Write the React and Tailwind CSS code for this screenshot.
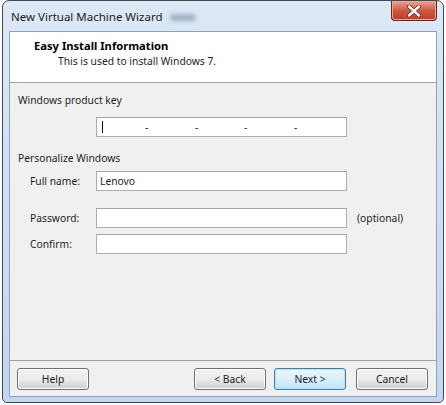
import React from "react";

const font = "font-['Noto_Sans','Liberation_Sans',sans-serif]";

function Field({ value, children }) {
  return (
    <div className="relative h-[20px] w-[251px] border border-[#abadb3] border-t-[#a0a4ab] bg-white text-[10.3px] leading-[18px] text-[#1e1e1e]">
      {value && <span className="pl-[3px]">{value}</span>}
      {children}
    </div>
  );
}

function Button({ label, primary }) {
  return (
    <button
      type="button"
      className={
        "h-[22px] w-[72px] rounded-[3px] border text-[10.3px] leading-[18px] text-[#1e1e1e] bg-gradient-to-b " +
        (primary
          ? "border-[#3c7fb1] from-[#eaf6fd] via-[#d9f0fc] to-[#bee6fd] shadow-[inset_0_0_0_1px_#b5e0f8]"
          : "border-[#707070] from-[#f2f2f2] via-[#ebebeb] to-[#cfcfcf] shadow-[inset_0_0_0_1px_#fcfcfc]")
      }
    >
      {label}
    </button>
  );
}

export default function App() {
  return (
    <div className={`h-[405px] w-[446px] bg-white ${font}`}>
      <div className="ml-[2px] flex h-[403px] w-[442px] flex-col rounded-t-[7px] rounded-b-[5px] border border-[#3f4a58] bg-gradient-to-b from-[#dde8f5] via-[#cfdff1] to-[#c2d6ee]">
        {/* title bar */}
        <div className="flex h-[30px] items-start">
          <div className="flex items-center pl-[8px] pt-[8px] text-[11.5px] leading-[16px] text-[#1a1a1a]">
            New Virtual Machine Wizard
            <span className="ml-[8px] inline-block h-[7px] w-[26px] rounded-full bg-[#9fb1c6] blur-[2px]" />
          </div>
          <div className="ml-auto mr-[6px] flex h-[20px] w-[46px] items-center justify-center rounded-b-[4px] border border-t-0 border-[#5a2b25] bg-gradient-to-b from-[#e7a596] via-[#d2573f] to-[#c23a1f] shadow-[inset_0_0_0_1px_#eba794]">
            <svg width="14" height="12" viewBox="0 0 14 12">
              <path
                d="M2 1.5 L12 10.5 M12 1.5 L2 10.5"
                stroke="#5a2b25"
                strokeWidth="4"
                strokeLinecap="round"
              />
              <path
                d="M2 1.5 L12 10.5 M12 1.5 L2 10.5"
                stroke="#ffffff"
                strokeWidth="2.4"
                strokeLinecap="round"
              />
            </svg>
          </div>
        </div>

        {/* client area */}
        <div className="mx-[6px] mb-[5px] flex flex-1 flex-col border border-[#8da2bb] bg-[#f0f0f0] text-[10.3px] leading-[16px] text-[#1e1e1e]">
          <div className="h-[51px] border-b border-[#a0a0a0] bg-white pl-[24px] pt-[6px]">
            <div className="text-[11.2px] font-bold text-black">Easy Install Information</div>
            <div className="pl-[24px] leading-[15px]">This is used to install Windows 7.</div>
          </div>

          <div className="pl-[8px] pt-[9px]">
            <div>Windows product key</div>
            <div className="ml-[78px] mt-[9px]">
              <Field>
                <span className="absolute left-[5px] top-[3px] h-[12px] w-px bg-black" />
                <span className="absolute left-[48px] top-0">-</span>
                <span className="absolute left-[98px] top-0">-</span>
                <span className="absolute left-[147px] top-0">-</span>
                <span className="absolute left-[197px] top-0">-</span>
              </Field>
            </div>

            <div className="mt-[13px]">Personalize Windows</div>

            <div className="mt-[5px] flex items-center">
              <span className="w-[78px] pl-[12px]">Full name:</span>
              <Field value="Lenovo" />
            </div>
            <div className="mt-[17px] flex items-center">
              <span className="w-[78px] pl-[12px]">Password:</span>
              <Field />
              <span className="ml-[10px]">(optional)</span>
            </div>
            <div className="mt-[6px] flex items-center">
              <span className="w-[78px] pl-[12px]">Confirm:</span>
              <Field />
            </div>
          </div>

          <div className="mt-auto flex border-t border-[#a0a0a0] pb-[6px] pl-[7px] pr-[8px] pt-[7px]">
            <div className="w-[73px]">
              <Button label="Help" />
            </div>
            <div className="ml-auto flex">
              <Button label="< Back" />
              <div className="ml-[8px]">
                <Button label="Next >" primary />
              </div>
              <div className="ml-[10px]">
                <Button label="Cancel" />
              </div>
            </div>
          </div>
        </div>
      </div>
    </div>
  );
}
